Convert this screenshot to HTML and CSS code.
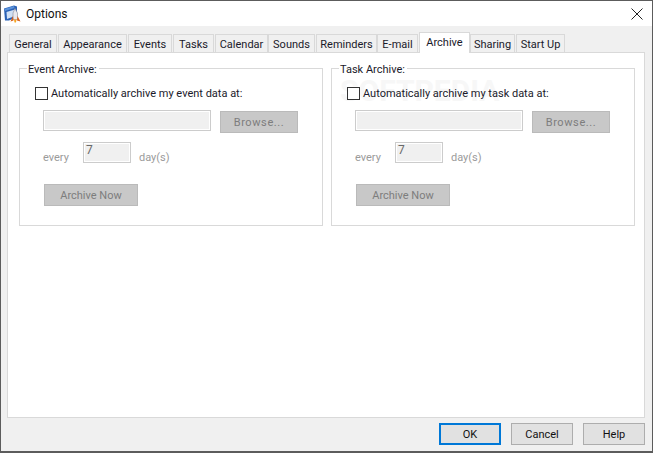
FILE: index.html
```html
<!DOCTYPE html>
<html lang="en">
<head>
<meta charset="utf-8">
<title>Options</title>
<link rel="stylesheet" href="styles.css">
</head>
<body>
<div class="window">
  <header class="titlebar">
    <svg class="appicon" width="18" height="18" viewBox="0 0 18 18">
      <path d="M0 3.5 L10 0.5 L13 1.5 L13 12 L5 15.5 L1 15.5 Z" fill="#2b62b5"/>
      <path d="M0.5 4 L10 1 L10.5 3 L1 6 Z" fill="#5b93dc"/>
      <path d="M2.5 7 L11 4.5 L11 11 L3 14 Z" fill="#cfe0f5"/>
      <path d="M11 3.5 L13.5 8 L13.5 14.5 L9 14.5 L9 8 Z" fill="#e9e9ee" stroke="#8a8a96" stroke-width=".6"/>
      <path d="M9 11 L6.5 16.5 L9.5 15.5 Z M13.5 11 L16.5 16.5 L13 15.5 Z" fill="#d9611a"/>
      <path d="M10 14.5 L12.5 14.5 L12 17.5 L10.5 17.5 Z" fill="#f5a623"/>
    </svg>
    <span class="title">Options</span>
    <svg class="close" width="12" height="12" viewBox="0 0 12 12"><path d="M.5.5 11.5 11.5M11.5.5.5 11.5" stroke="#222" stroke-width="1" fill="none"/></svg>
  </header>
  <main class="content">
    <nav class="tabs">
      <span class="tab t1">General</span>
      <span class="tab t2">Appearance</span>
      <span class="tab t3">Events</span>
      <span class="tab t4">Tasks</span>
      <span class="tab t5">Calendar</span>
      <span class="tab t6">Sounds</span>
      <span class="tab t7">Reminders</span>
      <span class="tab t8">E-mail</span>
      <span class="tab t9 selected">Archive</span>
      <span class="tab t10">Sharing</span>
      <span class="tab t11">Start Up</span>
    </nav>
    <section class="panel">
      <fieldset class="group">
        <legend>Event Archive:</legend>
        <label class="check"><span class="box"></span>Automatically archive my event data at:</label>
        <div class="path-row"><span class="field path"></span><span class="btn browse">Browse...</span></div>
        <div class="every-row"><span class="every">every</span><span class="field num">7</span><span class="days">day(s)</span></div>
        <span class="btn archive">Archive Now</span>
      </fieldset>
      <fieldset class="group">
        <legend>Task Archive:</legend>
        <label class="check"><span class="box"></span>Automatically archive my task data at:</label>
        <div class="path-row"><span class="field path"></span><span class="btn browse">Browse...</span></div>
        <div class="every-row"><span class="every">every</span><span class="field num">7</span><span class="days">day(s)</span></div>
        <span class="btn archive">Archive Now</span>
      </fieldset>
      <span class="watermark">SOFTPEDIA</span>
    </section>
    <footer class="footer">
      <span class="dbtn default">OK</span>
      <span class="dbtn">Cancel</span>
      <span class="dbtn">Help</span>
    </footer>
  </main>
</div>
</body>
</html>
```
FILE: styles.css
```css
* { box-sizing: border-box; }
html, body { margin: 0; padding: 0; height: 100%; }
body { font-family: Roboto, Lato, sans-serif; font-size: 11px; color: #1a1a2a; overflow: hidden; }
.window { width: 653px; height: 453px; border: 1px solid #5c5c5c; border-bottom-width: 2px; display: flex; flex-direction: column; background: #f0f0f0; }
.titlebar { height: 25px; background: #fff; display: flex; align-items: center; padding: 0 9px 0 3px; flex: none; }
.appicon { flex: none; margin-right: 4px; }
.title { font-size: 12px; color: #111; flex: 1; }
.content { flex: 1; display: flex; flex-direction: column; padding: 8px 7px 0 6px; min-height: 0; }
.tabs { display: flex; height: 18px; padding-left: 2px; position: relative; align-items: flex-end; flex: none; }
.tab { height: 18px; border: 1px solid #d9d9d9; border-bottom: 0; margin-right: 1px; padding-top: 2px; background: #f0f0f0; display: flex; align-items: center; justify-content: center; white-space: nowrap; }
.tab.selected { height: 21px; background: #fff; margin-bottom: -1px; position: relative; z-index: 1; padding: 0 0 1px; }
.t1 { width: 48px; } .t2 { width: 69px; } .t3 { width: 44px; } .t4 { width: 41px; } .t5 { width: 53px; margin-right: 0; } .t6 { width: 47px; }
.t7 { width: 61px; margin-right: 0; } .t8 { width: 41px; } .t9 { width: 51px; margin-right: 0; } .t10 { width: 45px; } .t11 { width: 49px; }
.panel { flex: 1; background: #fff; border: 1px solid #d9d9d9; display: flex; align-items: flex-start; gap: 8px; padding: 7px 8px 0 11px; position: relative; min-height: 0; }
.group { flex: none; width: 304px; height: 166px; margin: 0; border: 1px solid #d9d9d9; padding: 0 0 0 15px; display: flex; flex-direction: column; align-items: flex-start; position: relative; z-index: 1; background: transparent; }
.group legend { margin-left: -8px; padding: 4px 2px 0 1px; line-height: 12px; }
.check { display: flex; align-items: center; height: 17px; margin-top: 9px; }
.box { width: 13px; height: 13px; border: 1px solid #333; background: #fff; margin-right: 3px; }
.path-row { display: flex; margin: 8px 0 0 8px; align-items: flex-start; }
.field { display: block; border: 1px solid #ccc; outline: 1px solid #fff; outline-offset: -2px; background: #f0f0f0; }
.path { width: 168px; height: 21px; }
.btn { display: flex; align-items: center; justify-content: center; background: #c8c8c8; border: 1px solid #bababa; color: #7d7d7d; }
.browse { width: 78px; height: 22px; margin: 1px 0 0 9px; letter-spacing: .6px; }
.every-row { display: flex; align-items: flex-start; margin: 9px 0 0 8px; color: #9b9b9b; }
.every { width: 40px; margin-top: 9px; }
.num { width: 48px; height: 21px; color: #6a6a6a; padding: 0 0 0 2px; line-height: 15px; font-size: 12px; }
.days { margin: 9px 0 0 8px; }
.archive { width: 94px; height: 22px; margin: 20px 0 0 9px; }
.watermark { position: absolute; left: 332px; top: 20px; font-size: 30px; line-height: 36px; font-weight: 700; color: #f7f7f7; white-space: nowrap; }
.footer { height: 33px; flex: none; display: flex; justify-content: flex-end; align-items: flex-start; gap: 10px; padding: 5px 0 0; }
.dbtn { width: 62px; height: 22px; background: #e1e1e1; border: 1px solid #adadad; display: flex; align-items: center; justify-content: center; color: #111; }
.dbtn.default { border: 2px solid #0078d7; }
```
